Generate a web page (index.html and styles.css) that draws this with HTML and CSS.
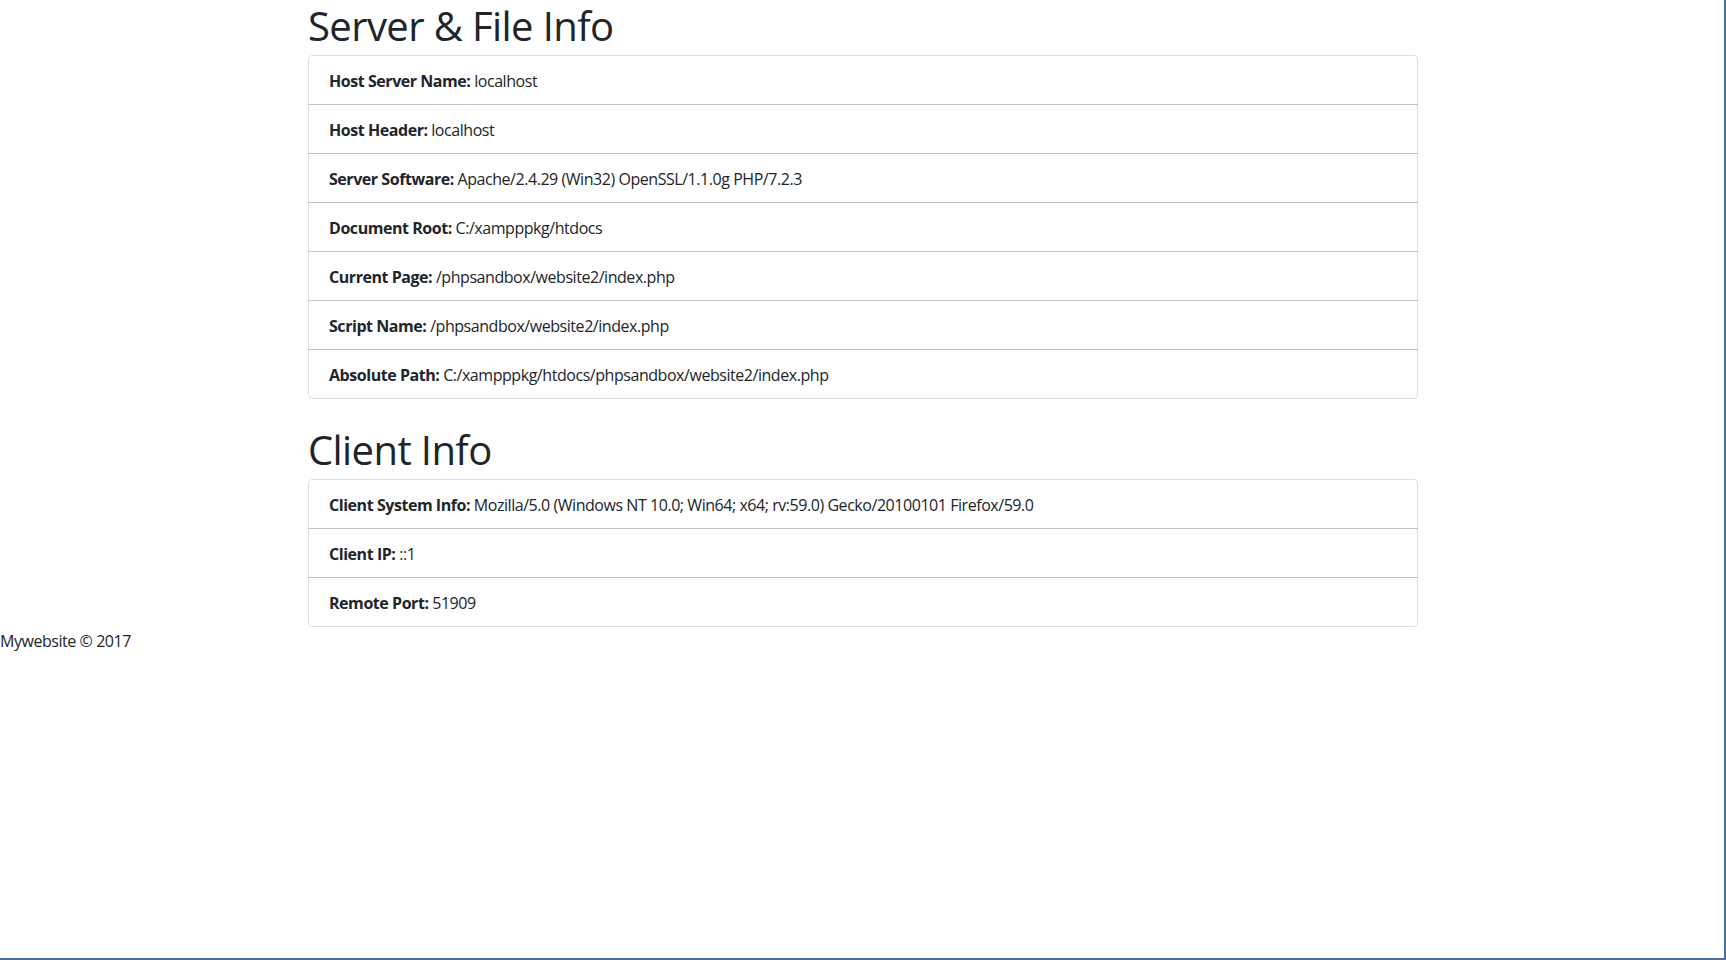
FILE: index.html
```html
<!DOCTYPE html>
<html lang="en">
<head>
<meta charset="utf-8">
<title>Server &amp; File Info</title>
<link rel="stylesheet" href="styles.css">
</head>
<body>
<div class="frame">
  <div class="container">
    <h1 class="title">Server &amp; File Info</h1>
    <ul class="list-group">
      <li class="list-group-item"><strong>Host Server Name:</strong> localhost</li>
      <li class="list-group-item"><strong>Host Header:</strong> localhost</li>
      <li class="list-group-item"><strong>Server Software:</strong> Apache/2.4.29 (Win32) OpenSSL/1.1.0g PHP/7.2.3</li>
      <li class="list-group-item"><strong>Document Root:</strong> C:/xampppkg/htdocs</li>
      <li class="list-group-item"><strong>Current Page:</strong> /phpsandbox/website2/index.php</li>
      <li class="list-group-item"><strong>Script Name:</strong> /phpsandbox/website2/index.php</li>
      <li class="list-group-item"><strong>Absolute Path:</strong> C:/xampppkg/htdocs/phpsandbox/website2/index.php</li>
    </ul>
    <h1 class="title second">Client Info</h1>
    <ul class="list-group">
      <li class="list-group-item"><strong>Client System Info:</strong> Mozilla/5.0 (Windows NT 10.0; Win64; x64; rv:59.0) Gecko/20100101 Firefox/59.0</li>
      <li class="list-group-item"><strong>Client IP:</strong> ::1</li>
      <li class="list-group-item"><strong>Remote Port:</strong> 51909</li>
    </ul>
  </div>
  <footer class="footer">Mywebsite &copy; 2017</footer>
</div>
</body>
</html>
```
FILE: styles.css
```css
html, body {
  margin: 0;
  padding: 0;
}
body {
  font-family: "Open Sans", "Noto Sans", sans-serif;
  font-size: 16px;
  line-height: 1.5;
  letter-spacing: -0.45px;
  color: #212529;
  background: #ffffff;
}
.frame {
  min-height: 100vh;
  box-sizing: border-box;
  box-shadow: inset -2px -2px 0 #46739f;
}
.container {
  width: 1110px;
  margin: 0 auto;
}
.title {
  font-size: 40px;
  font-weight: 400;
  line-height: 1.2;
  letter-spacing: -0.6px;
  margin: 0 0 7px 0;
  padding-top: 2px;
  height: 48px;
  box-sizing: border-box;
}
.title.second {
  margin-top: 25px;
}
.list-group {
  list-style: none;
  margin: 0;
  padding: 0;
  display: flex;
  flex-direction: column;
}
.list-group-item {
  border: 1px solid rgba(0, 0, 0, 0.125);
  padding: 13px 20px 11px;
  margin-bottom: -1px;
}
.list-group-item:first-child {
  border-top-left-radius: 4px;
  border-top-right-radius: 4px;
}
.list-group-item:last-child {
  margin-bottom: 0;
  border-bottom-left-radius: 4px;
  border-bottom-right-radius: 4px;
}
strong {
  font-weight: 700;
}
.footer {
  padding-top: 2px;
}
```
